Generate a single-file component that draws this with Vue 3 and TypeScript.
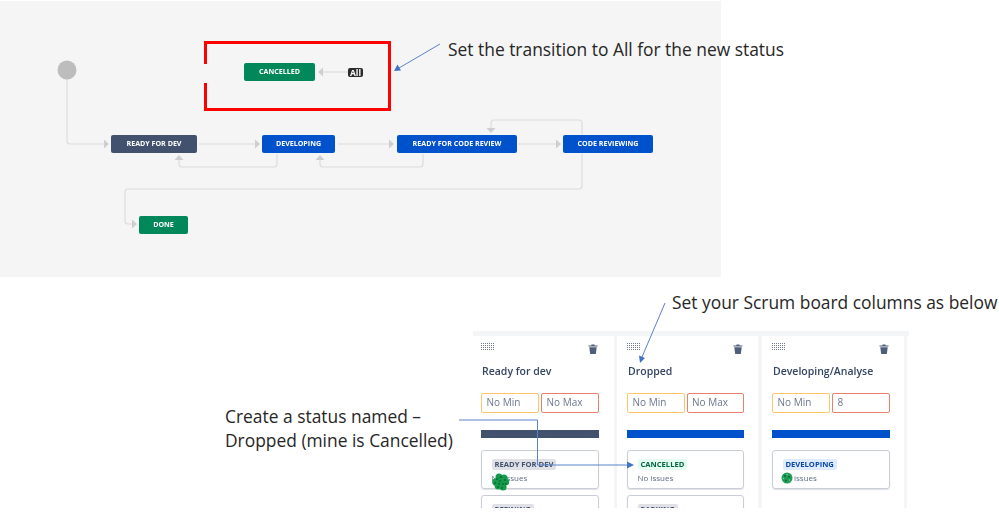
<script setup lang="ts">
interface Node { label: string; x: number; y: number; w: number; color: string }
interface Card { tag: string; kind: string; sub: string; avatar: string }
interface Col { title: string; min: string; max: string; bar: string; cards: Card[] }

const nodes: Node[] = [
  { label: 'CANCELLED', x: 244, y: 63, w: 71, color: '#00875a' },
  { label: 'READY FOR DEV', x: 111, y: 135, w: 86, color: '#42526e' },
  { label: 'DEVELOPING', x: 262, y: 135, w: 73, color: '#0052cc' },
  { label: 'READY FOR CODE REVIEW', x: 397, y: 135, w: 120, color: '#0052cc' },
  { label: 'CODE REVIEWING', x: 563, y: 135, w: 90, color: '#0052cc' },
  { label: 'DONE', x: 139, y: 216, w: 49, color: '#00875a' },
]

const cols: Col[] = [
  {
    title: 'Ready for dev', min: 'No Min', max: 'No Max', bar: '#42526e',
    cards: [
      { tag: 'READY FOR DEV', kind: 'grey', sub: 'No issues', avatar: 'none' },
      { tag: 'REFINING', kind: 'grey', sub: '', avatar: 'none' },
    ],
  },
  {
    title: 'Dropped', min: 'No Min', max: 'No Max', bar: '#0052cc',
    cards: [
      { tag: 'CANCELLED', kind: 'green', sub: 'No issues', avatar: 'none' },
      { tag: 'PARKING', kind: 'grey', sub: '', avatar: 'none' },
    ],
  },
  {
    title: 'Developing/Analyse', min: 'No Min', max: '8', bar: '#0052cc',
    cards: [{ tag: 'DEVELOPING', kind: 'blue', sub: 'issues', avatar: 'small' }],
  },
]

const gridDots: { x: number; y: number }[] = []
for (let r = 0; r < 4; r++) for (let c = 0; c < 7; c++) gridDots.push({ x: c * 2, y: r * 2 })

const blob: number[][] = [
  [7, 4, 3.5], [12, 5, 3.5], [4, 9, 3.8], [9, 9, 4.5], [14, 9, 3.2], [6, 13, 3.4], [11, 14, 3.6],
]
const specks: number[][] = [
  [5, 6], [9, 4], [13, 7], [3, 10], [8, 8], [11, 11], [6, 14], [14, 11], [10, 15], [7, 11],
]
</script>

<template>
  <div class="page">
    <section class="diagram">
      <div
        v-for="n in nodes"
        :key="n.label"
        class="node"
        :style="{ left: n.x + 'px', top: n.y + 'px', width: n.w + 'px', background: n.color }"
      >{{ n.label }}</div>
      <span class="all">All</span>
    </section>

    <section class="lower">
      <div class="board">
        <div class="columns">
          <article v-for="c in cols" :key="c.title" class="col">
            <div class="col-top">
              <svg class="grip" width="14" height="8" viewBox="0 0 14 8" shape-rendering="crispEdges">
                <rect v-for="(d, i) in gridDots" :key="i" :x="d.x" :y="d.y" width="1" height="1" fill="#6f7a8c" />
              </svg>
              <svg class="trash" width="10" height="10" viewBox="0 0 10 10">
                <path d="M3.600.6h2.800l.4.9H9.500v1.100H.5V1.500h2.700zM1.300 3.300h7.400l-.8 6.100a.7.7 0 0 1-.7.600H2.800a.7.7 0 0 1-.7-.6z" fill="#505f79" />
              </svg>
            </div>
            <h3 class="col-title">{{ c.title }}</h3>
            <div class="limits">
              <div class="limit min">{{ c.min }}</div>
              <div class="limit max">{{ c.max }}</div>
            </div>
            <div class="bar" :style="{ background: c.bar }"></div>
            <div v-for="card in c.cards" :key="card.tag" class="card">
              <span class="tag" :class="card.kind">{{ card.tag }}</span>
              <div v-if="card.sub" class="sub">
                <svg v-if="card.avatar === 'small'" class="mini" width="12" height="12" viewBox="0 0 12 12">
                  <circle cx="6" cy="6" r="5.500" fill="#1f9d57" />
                  <circle cx="4" cy="4" r="1" fill="#0d6b3a" />
                  <circle cx="8" cy="5" r="1" fill="#0d6b3a" />
                  <circle cx="5" cy="8.500" r="1" fill="#0d6b3a" />
                  <circle cx="6" cy="2.500" r=".7" fill="#7fd4a4" />
                  <circle cx="8.500" cy="8" r=".7" fill="#7fd4a4" />
                  <circle cx="2.500" cy="6.500" r=".7" fill="#7fd4a4" />
                </svg>
                {{ card.sub }}
              </div>
            </div>
          </article>
        </div>
      </div>
    </section>

    <svg class="flow" width="999" height="513" viewBox="0 0 999 513">
      <g fill="none" stroke="#dcdcdc" stroke-width="1.200">
        <path d="M67 79V141q0 3 3 3H105" />
        <path d="M199 144H256" />
        <path d="M338 144H390" />
        <path d="M518 144H557" />
        <path d="M277 154v10q0 3-3 3H182q-3 0-3-3v-6" />
        <path d="M423 154v10q0 3-3 3H323q-3 0-3-3v-6" />
        <path d="M582 134V123q0-3-3-3H494q-3 0-3 3v6" />
        <path d="M582 154V186q0 3-3 3H128q-3 0-3 3V221q0 3 3 3H133" />
        <path d="M348 72H322" />
      </g>
      <g fill="#cfcfcf">
        <path d="M104 139.500l5 4.500-5 4.500z" />
        <path d="M255 139.500l5 4.500-5 4.500z" />
        <path d="M389 139.500l5 4.500-5 4.500z" />
        <path d="M556 139.500l5 4.500-5 4.500z" />
        <path d="M174.500 160l4.500-5 4.500 5z" />
        <path d="M315.500 160l4.500-5 4.500 5z" />
        <path d="M486.500 128l4.500 5 4.500-5z" />
        <path d="M132 219.500l5 4.500-5 4.500z" />
        <path d="M323 67.500l-5 4.500 5 4.500z" />
      </g>
      <circle cx="67" cy="70" r="9.500" fill="#bdbdbd" />

      <path d="M205.500 64V42.500H389.500V109.500H205.500V83" fill="none" stroke="#ff0000" stroke-width="3" />

      <g fill="none" stroke="#5b82cc" stroke-width="1">
        <path d="M440 44L399 68" />
        <path d="M665 303L642 357" />
        <path d="M459 420H537.500V465H628" />
      </g>
      <g fill="#4472c4">
        <path d="M394 71l3.500-6.500 3.500 6z" />
        <path d="M640 363l-1-7.500 6 2.500z" />
        <path d="M634 465l-7-3.500v7z" />
      </g>

      <g>
        <circle v-for="(b, i) in blob" :key="i" :cx="b[0] + 492" :cy="b[1] + 473" :r="b[2]" fill="#169a4c" />
        <circle v-for="(s, i) in specks" :key="'s' + i" :cx="s[0] + 492" :cy="s[1] + 473" r="1" fill="#0b6e36" />
      </g>
    </svg>

    <p class="note n1">Set the transition to All for the new status</p>
    <p class="note n2">Set your Scrum board columns as below</p>
    <p class="note n3">Create a status named –<br />Dropped (mine is Cancelled)</p>
  </div>
</template>

<style scoped>
.page {
  position: relative;
  width: 999px;
  height: 513px;
  overflow: hidden;
  background: #fff;
  font-family: "Open Sans", "Noto Sans", sans-serif;
}
.diagram {
  position: relative;
  width: 721px;
  height: 277px;
  border-top: 1px solid #fff;
  box-sizing: border-box;
  background: #f5f5f5;
  filter: blur(0.3px);
}
.node {
  position: absolute;
  height: 18px;
  margin-top: -1px;
  border-radius: 2px;
  color: #fff;
  font-size: 7.100px;
  font-weight: 700;
  line-height: 17px;
  text-align: center;
  white-space: nowrap;
}
.all {
  position: absolute;
  left: 348px;
  top: 67px;
  width: 15px;
  height: 9px;
  border-radius: 2px;
  background: #2b2b2b;
  color: #fff;
  font-size: 8.500px;
  font-weight: 700;
  line-height: 9px;
  text-align: center;
}
.lower {
  display: flex;
  padding: 54px 0 0 473px;
}
.board {
  width: 436px;
  height: 177px;
  padding-top: 5px;
  box-sizing: border-box;
  background: linear-gradient(#f4f5f7, #f4f5f7) 0 0 / 100% 5px no-repeat;
  filter: blur(0.3px);
}
.columns {
  display: flex;
  gap: 3px;
  width: 434px;
  height: 172px;
  background: #f4f5f7;
}
.col {
  width: 141px;
  flex: none;
  padding: 0 14px 0 10px;
  box-sizing: border-box;
  background: #fff;
  overflow: hidden;
}
.col:first-child {
  padding: 0 15px 0 8px;
}
.col:last-child {
  width: 142px;
  margin-left: 1px;
}
.col-top {
  display: flex;
  justify-content: space-between;
  padding: 7px 1px 0 0;
  height: 12px;
}
.trash {
  margin-top: 1px;
}
.col-title {
  margin: 7px 0 0 1px;
  height: 19px;
  color: #344563;
  font-size: 10.500px;
  font-weight: 600;
  line-height: 18px;
  white-space: nowrap;
}
.limits {
  display: flex;
  gap: 2px;
  margin-top: 12px;
}
.limit {
  flex: 1;
  height: 20px;
  box-sizing: border-box;
  padding-left: 4.500px;
  border-radius: 2px;
  color: #6b778c;
  font-size: 10px;
  line-height: 17px;
}
.limit.min {
  border: 1.700px solid #ffc56b;
}
.limit.max {
  border: 1.700px solid #e9806c;
}
.bar {
  height: 8px;
  margin-top: 17px;
}
.card {
  height: 39px;
  box-sizing: border-box;
  margin-top: 12px;
  padding: 7.500px 9.500px 0;
  border: 1.500px solid #c9ced6;
  border-radius: 3px;
  box-shadow: 0 1px 1px #dfe1e6;
}
.card + .card {
  margin-top: 6px;
}
.tag {
  display: block;
  width: fit-content;
  height: 11px;
  padding: 0 3px;
  border-radius: 2px;
  font-size: 7.600px;
  font-weight: 700;
  line-height: 11px;
  white-space: nowrap;
}
.tag.grey {
  background: #dfe1e6;
  color: #42526e;
}
.tag.green {
  background: #e3fcef;
  color: #006644;
}
.tag.blue {
  background: #deebff;
  color: #0747a6;
}
.sub {
  display: flex;
  align-items: center;
  gap: 1px;
  height: 14px;
  margin-top: 1px;
  color: #5e6c84;
  font-size: 8px;
  line-height: 14px;
}
.mini {
  margin-left: -1.500px;
}
.flow {
  position: absolute;
  inset: 0;
  pointer-events: none;
}
.note {
  position: absolute;
  margin: 0;
  color: #262626;
  font-size: 17.400px;
  line-height: 24px;
  white-space: nowrap;
}
.n1 {
  left: 448px;
  top: 37px;
}
.n2 {
  left: 672px;
  top: 290px;
}
.n3 {
  left: 225px;
  top: 404px;
}
</style>
